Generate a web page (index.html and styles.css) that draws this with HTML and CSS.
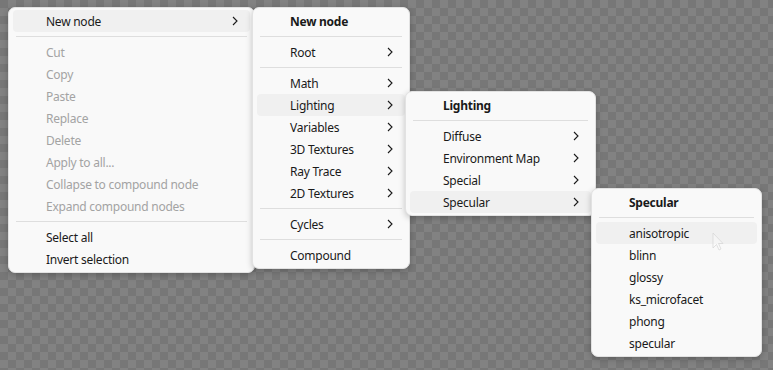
FILE: index.html
```html
<!DOCTYPE html>
<html lang="en">
<head>
    <meta charset="UTF-8">
    <title>Node editor context menu</title>
    <link rel="stylesheet" href="styles.css">
</head>
<body>

    <div class="canvas">

        <!-- main context menu -->
        <div class="menu menu-main">
            <div class="item active"><span>New node</span><svg class="arrow" viewBox="0 0 6 10"><polyline points="1,1 5,5 1,9"/></svg></div>
            <div class="sep"></div>
            <div class="item disabled">Cut</div>
            <div class="item disabled">Copy</div>
            <div class="item disabled">Paste</div>
            <div class="item disabled">Replace</div>
            <div class="item disabled">Delete</div>
            <div class="item disabled">Apply to all...</div>
            <div class="item disabled">Collapse to compound node</div>
            <div class="item disabled">Expand compound nodes</div>
            <div class="sep"></div>
            <div class="item">Select all</div>
            <div class="item">Invert selection</div>
        </div>

        <!-- new node -->
        <div class="menu menu-node">
            <div class="item title">New node</div>
            <div class="sep"></div>
            <div class="item"><span>Root</span><svg class="arrow" viewBox="0 0 6 10"><polyline points="1,1 5,5 1,9"/></svg></div>
            <div class="sep"></div>
            <div class="item"><span>Math</span><svg class="arrow" viewBox="0 0 6 10"><polyline points="1,1 5,5 1,9"/></svg></div>
            <div class="item active"><span>Lighting</span><svg class="arrow" viewBox="0 0 6 10"><polyline points="1,1 5,5 1,9"/></svg></div>
            <div class="item"><span>Variables</span><svg class="arrow" viewBox="0 0 6 10"><polyline points="1,1 5,5 1,9"/></svg></div>
            <div class="item"><span>3D Textures</span><svg class="arrow" viewBox="0 0 6 10"><polyline points="1,1 5,5 1,9"/></svg></div>
            <div class="item"><span>Ray Trace</span><svg class="arrow" viewBox="0 0 6 10"><polyline points="1,1 5,5 1,9"/></svg></div>
            <div class="item"><span>2D Textures</span><svg class="arrow" viewBox="0 0 6 10"><polyline points="1,1 5,5 1,9"/></svg></div>
            <div class="sep"></div>
            <div class="item"><span>Cycles</span><svg class="arrow" viewBox="0 0 6 10"><polyline points="1,1 5,5 1,9"/></svg></div>
            <div class="sep"></div>
            <div class="item">Compound</div>
        </div>

        <!-- lighting -->
        <div class="menu menu-lighting">
            <div class="item title">Lighting</div>
            <div class="sep"></div>
            <div class="item"><span>Diffuse</span><svg class="arrow" viewBox="0 0 6 10"><polyline points="1,1 5,5 1,9"/></svg></div>
            <div class="item"><span>Environment Map</span><svg class="arrow" viewBox="0 0 6 10"><polyline points="1,1 5,5 1,9"/></svg></div>
            <div class="item"><span>Special</span><svg class="arrow" viewBox="0 0 6 10"><polyline points="1,1 5,5 1,9"/></svg></div>
            <div class="item active"><span>Specular</span><svg class="arrow" viewBox="0 0 6 10"><polyline points="1,1 5,5 1,9"/></svg></div>
        </div>

        <!-- specular -->
        <div class="menu menu-specular">
            <div class="item title">Specular</div>
            <div class="sep"></div>
            <div class="item active">anisotropic</div>
            <div class="item">blinn</div>
            <div class="item">glossy</div>
            <div class="item">ks_microfacet</div>
            <div class="item">phong</div>
            <div class="item">specular</div>
        </div>

        <svg class="cursor" viewBox="0 0 12 19"><path d="M1 1 L1 16 L4.5 12.5 L7 18 L9 17 L6.5 11.5 L11 11.5 Z"/></svg>
    </div>

</body>
</html>
```

FILE: styles.css
```css
body {
    margin: 0;
    font-family: "Noto Sans", "Open Sans", sans-serif;
    font-size: 12px;
    letter-spacing: -0.25px;
    color: #1a1a1a;
}

/* transparent-looking backdrop */
.canvas {
    position: relative;
    width: 773px;
    height: 370px;
    overflow: hidden;
    background-color: #777;
    background-image:
        linear-gradient(45deg, #828282 25%, transparent 25%, transparent 75%, #828282 75%),
        linear-gradient(45deg, #828282 25%, transparent 25%, transparent 75%, #828282 75%);
    background-size: 16px 16px;
    background-position: 0 0, 8px 8px;
}

.menu {
    position: absolute;
    box-sizing: border-box;
    display: flex;
    flex-direction: column;
    padding: 2px 4px;
    background: #f9f9f9;
    border: 1px solid #e2e2e2;
    border-radius: 7px;
    box-shadow: 0 2px 6px rgba(0, 0, 0, 0.22);
}

.menu-main {
    left: 8px;
    top: 7px;
    width: 247px;
}

.menu-node {
    left: 252px;
    top: 7px;
    width: 158px;
}

.menu-lighting {
    left: 405px;
    top: 91px;
    width: 191px;
}

.menu-specular {
    left: 591px;
    top: 188px;
    width: 171px;
}

.item {
    display: flex;
    align-items: center;
    justify-content: space-between;
    height: 22px;
    padding: 0 12px 0 33px;
    border-radius: 4px;
    white-space: nowrap;
}

.item.active {
    background: #f0f0f0;
}

.item.title {
    font-weight: bold;
}

.item.disabled {
    color: #a3a3a3;
}

.arrow {
    width: 6px;
    height: 10px;
    fill: none;
    stroke: #1a1a1a;
    stroke-width: 1.1;
}

.sep {
    height: 1px;
    margin: 4px 3px;
    background: #dedede;
}

.cursor {
    position: absolute;
    left: 712px;
    top: 232px;
    width: 12px;
    height: 19px;
    fill: rgba(255, 255, 255, 0.35);
    stroke: rgba(210, 210, 210, 0.8);
    stroke-width: 0.8;
}
```
